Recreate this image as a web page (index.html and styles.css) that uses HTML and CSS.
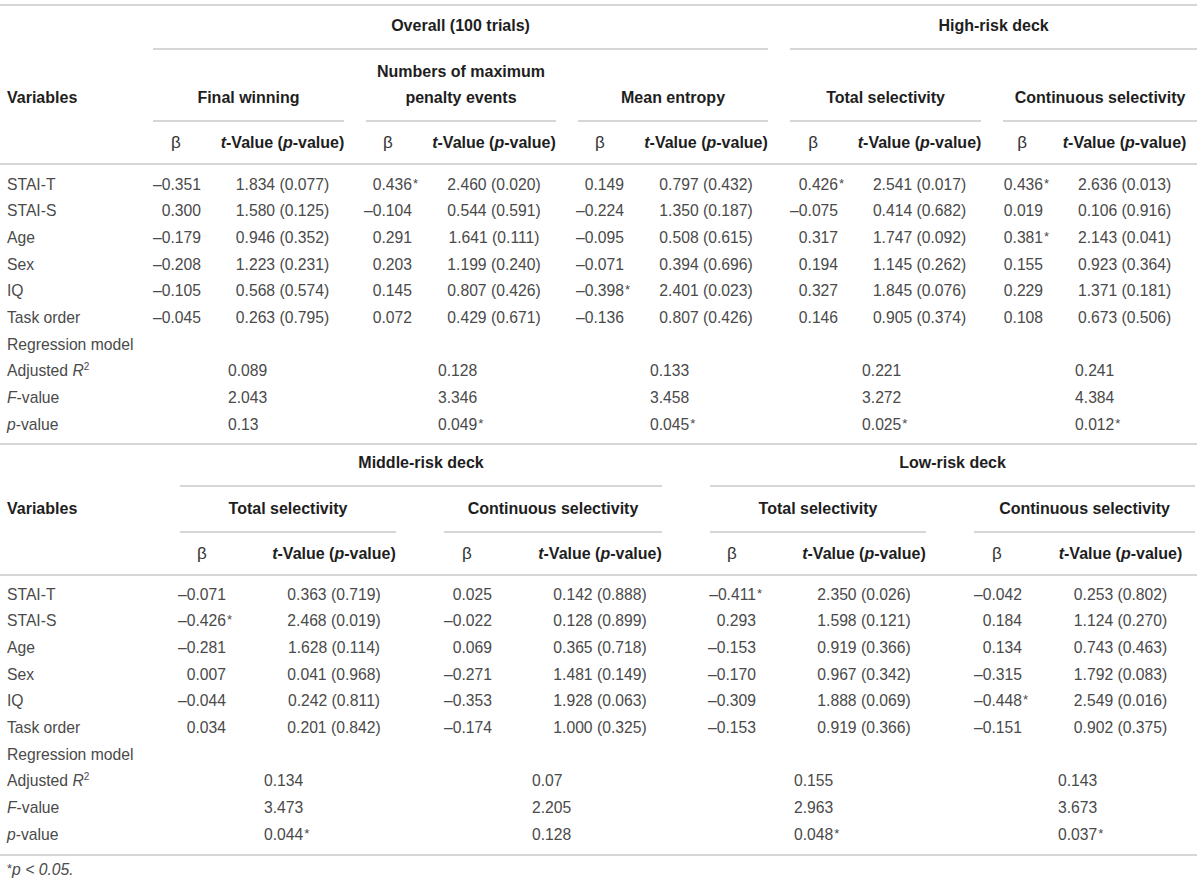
FILE: index.html
```html
<!DOCTYPE html>
<html lang="en">
<head>
<meta charset="utf-8">
<title>Regression table</title>
<link rel="stylesheet" href="styles.css">
</head>
<body>
<div class="wrap">
<table class="t t1">
  <colgroup>
    <col class="w142"><col class="w68"><col class="w145"><col class="w66"><col class="w146"><col class="w66"><col class="w146"><col class="w68"><col class="w145"><col class="w60"><col class="w145">
  </colgroup>
  <thead>
    <tr class="h1">
      <th></th>
      <th colspan="6" class="grp"><div class="ul">Overall (100 trials)</div></th>
      <th colspan="4" class="grp last"><div class="ul">High-risk deck</div></th>
    </tr>
    <tr class="h2">
      <th class="var">Variables</th>
      <th colspan="2" class="grp"><div class="ul">Final winning</div></th>
      <th colspan="2" class="grp"><div class="ul">Numbers of maximum<br>penalty events</div></th>
      <th colspan="2" class="grp"><div class="ul">Mean entropy</div></th>
      <th colspan="2" class="grp"><div class="ul">Total selectivity</div></th>
      <th colspan="2" class="grp last"><div class="ul">Continuous selectivity</div></th>
    </tr>
    <tr class="h3">
      <th></th>
      <th class="beta">β</th><th><i>t</i>-Value (<i>p</i>-value)</th>
      <th class="beta">β</th><th><i>t</i>-Value (<i>p</i>-value)</th>
      <th class="beta">β</th><th><i>t</i>-Value (<i>p</i>-value)</th>
      <th class="beta">β</th><th><i>t</i>-Value (<i>p</i>-value)</th>
      <th class="beta">β</th><th><i>t</i>-Value (<i>p</i>-value)</th>
    </tr>
  </thead>
  <tbody>
    <tr class="first"><td class="lab">STAI-T</td><td class="b">–0.351</td><td class="tv">1.834 (0.077)</td><td class="b">0.436<span class="s">*</span></td><td class="tv">2.460 (0.020)</td><td class="b">0.149</td><td class="tv">0.797 (0.432)</td><td class="b">0.426<span class="s">*</span></td><td class="tv">2.541 (0.017)</td><td class="b">0.436<span class="s">*</span></td><td class="tv">2.636 (0.013)</td></tr>
    <tr><td class="lab">STAI-S</td><td class="b">0.300</td><td class="tv">1.580 (0.125)</td><td class="b">–0.104</td><td class="tv">0.544 (0.591)</td><td class="b">–0.224</td><td class="tv">1.350 (0.187)</td><td class="b">–0.075</td><td class="tv">0.414 (0.682)</td><td class="b">0.019</td><td class="tv">0.106 (0.916)</td></tr>
    <tr><td class="lab">Age</td><td class="b">–0.179</td><td class="tv">0.946 (0.352)</td><td class="b">0.291</td><td class="tv">1.641 (0.111)</td><td class="b">–0.095</td><td class="tv">0.508 (0.615)</td><td class="b">0.317</td><td class="tv">1.747 (0.092)</td><td class="b">0.381<span class="s">*</span></td><td class="tv">2.143 (0.041)</td></tr>
    <tr><td class="lab">Sex</td><td class="b">–0.208</td><td class="tv">1.223 (0.231)</td><td class="b">0.203</td><td class="tv">1.199 (0.240)</td><td class="b">–0.071</td><td class="tv">0.394 (0.696)</td><td class="b">0.194</td><td class="tv">1.145 (0.262)</td><td class="b">0.155</td><td class="tv">0.923 (0.364)</td></tr>
    <tr><td class="lab">IQ</td><td class="b">–0.105</td><td class="tv">0.568 (0.574)</td><td class="b">0.145</td><td class="tv">0.807 (0.426)</td><td class="b">–0.398<span class="s">*</span></td><td class="tv">2.401 (0.023)</td><td class="b">0.327</td><td class="tv">1.845 (0.076)</td><td class="b">0.229</td><td class="tv">1.371 (0.181)</td></tr>
    <tr><td class="lab">Task order</td><td class="b">–0.045</td><td class="tv">0.263 (0.795)</td><td class="b">0.072</td><td class="tv">0.429 (0.671)</td><td class="b">–0.136</td><td class="tv">0.807 (0.426)</td><td class="b">0.146</td><td class="tv">0.905 (0.374)</td><td class="b">0.108</td><td class="tv">0.673 (0.506)</td></tr>
    <tr><td class="lab" colspan="11">Regression model</td></tr>
    <tr><td class="lab">Adjusted <i>R</i><sup>2</sup></td><td colspan="2" class="rv g1">0.089</td><td colspan="2" class="rv">0.128</td><td colspan="2" class="rv">0.133</td><td colspan="2" class="rv">0.221</td><td colspan="2" class="rv">0.241</td></tr>
    <tr><td class="lab"><i>F</i>-value</td><td colspan="2" class="rv g1">2.043</td><td colspan="2" class="rv">3.346</td><td colspan="2" class="rv">3.458</td><td colspan="2" class="rv">3.272</td><td colspan="2" class="rv">4.384</td></tr>
    <tr class="lastrow"><td class="lab"><i>p</i>-value</td><td colspan="2" class="rv g1">0.13</td><td colspan="2" class="rv">0.049<span class="a">*</span></td><td colspan="2" class="rv">0.045<span class="a">*</span></td><td colspan="2" class="rv">0.025<span class="a">*</span></td><td colspan="2" class="rv">0.012<span class="a">*</span></td></tr>
  </tbody>
</table>

<table class="t t2">
  <colgroup>
    <col class="w156"><col class="w92"><col class="w172"><col class="w94"><col class="w172"><col class="w92"><col class="w172"><col class="w94"><col class="w153">
  </colgroup>
  <thead>
    <tr class="h1">
      <th></th>
      <th colspan="4" class="grp"><div class="ul">Middle-risk deck</div></th>
      <th colspan="4" class="grp last"><div class="ul">Low-risk deck</div></th>
    </tr>
    <tr class="h2">
      <th class="var">Variables</th>
      <th colspan="2" class="grp"><div class="ul">Total selectivity</div></th>
      <th colspan="2" class="grp"><div class="ul">Continuous selectivity</div></th>
      <th colspan="2" class="grp"><div class="ul">Total selectivity</div></th>
      <th colspan="2" class="grp last"><div class="ul">Continuous selectivity</div></th>
    </tr>
    <tr class="h3">
      <th></th>
      <th class="beta">β</th><th><i>t</i>-Value (<i>p</i>-value)</th>
      <th class="beta">β</th><th><i>t</i>-Value (<i>p</i>-value)</th>
      <th class="beta">β</th><th><i>t</i>-Value (<i>p</i>-value)</th>
      <th class="beta">β</th><th><i>t</i>-Value (<i>p</i>-value)</th>
    </tr>
  </thead>
  <tbody>
    <tr class="first"><td class="lab">STAI-T</td><td class="b">–0.071</td><td class="tv">0.363 (0.719)</td><td class="b">0.025</td><td class="tv">0.142 (0.888)</td><td class="b">–0.411<span class="s">*</span></td><td class="tv">2.350 (0.026)</td><td class="b">–0.042</td><td class="tv">0.253 (0.802)</td></tr>
    <tr><td class="lab">STAI-S</td><td class="b">–0.426<span class="s">*</span></td><td class="tv">2.468 (0.019)</td><td class="b">–0.022</td><td class="tv">0.128 (0.899)</td><td class="b">0.293</td><td class="tv">1.598 (0.121)</td><td class="b">0.184</td><td class="tv">1.124 (0.270)</td></tr>
    <tr><td class="lab">Age</td><td class="b">–0.281</td><td class="tv">1.628 (0.114)</td><td class="b">0.069</td><td class="tv">0.365 (0.718)</td><td class="b">–0.153</td><td class="tv">0.919 (0.366)</td><td class="b">0.134</td><td class="tv">0.743 (0.463)</td></tr>
    <tr><td class="lab">Sex</td><td class="b">0.007</td><td class="tv">0.041 (0.968)</td><td class="b">–0.271</td><td class="tv">1.481 (0.149)</td><td class="b">–0.170</td><td class="tv">0.967 (0.342)</td><td class="b">–0.315</td><td class="tv">1.792 (0.083)</td></tr>
    <tr><td class="lab">IQ</td><td class="b">–0.044</td><td class="tv">0.242 (0.811)</td><td class="b">–0.353</td><td class="tv">1.928 (0.063)</td><td class="b">–0.309</td><td class="tv">1.888 (0.069)</td><td class="b">–0.448<span class="s">*</span></td><td class="tv">2.549 (0.016)</td></tr>
    <tr><td class="lab">Task order</td><td class="b">0.034</td><td class="tv">0.201 (0.842)</td><td class="b">–0.174</td><td class="tv">1.000 (0.325)</td><td class="b">–0.153</td><td class="tv">0.919 (0.366)</td><td class="b">–0.151</td><td class="tv">0.902 (0.375)</td></tr>
    <tr><td class="lab" colspan="9">Regression model</td></tr>
    <tr><td class="lab">Adjusted <i>R</i><sup>2</sup></td><td colspan="2" class="rv">0.134</td><td colspan="2" class="rv g2">0.07</td><td colspan="2" class="rv">0.155</td><td colspan="2" class="rv">0.143</td></tr>
    <tr><td class="lab"><i>F</i>-value</td><td colspan="2" class="rv">3.473</td><td colspan="2" class="rv g2">2.205</td><td colspan="2" class="rv">2.963</td><td colspan="2" class="rv">3.673</td></tr>
    <tr class="lastrow"><td class="lab"><i>p</i>-value</td><td colspan="2" class="rv">0.044<span class="a">*</span></td><td colspan="2" class="rv g2">0.128</td><td colspan="2" class="rv">0.048<span class="a">*</span></td><td colspan="2" class="rv">0.037<span class="a">*</span></td></tr>
  </tbody>
</table>
<p class="note"><span class="a">*</span><i>p &lt; 0.05.</i></p>
</div>
</body>
</html>
```

FILE: styles.css
```css
* { box-sizing: border-box; }
html, body { margin: 0; padding: 0; background: #fff; }
body {
  font-family: "Liberation Sans", Arial, Helvetica, sans-serif;
  font-size: 15.7px;
  line-height: 26.67px;
  color: #4a4a4a;
}
.wrap { padding-top: 4px; }

.t {
  width: 1197px;
  table-layout: fixed;
  border-collapse: separate;
  border-spacing: 0;
}
.t1 { border-top: 2px solid #d6d6d6; }

.w142 { width: 142px; } .w68 { width: 68px; } .w145 { width: 145px; }
.w66 { width: 66px; } .w146 { width: 146px; } .w60 { width: 60px; }
.w156 { width: 156px; } .w92 { width: 92px; } .w172 { width: 172px; }
.w94 { width: 94px; } .w153 { width: 153px; }

th {
  font-size: 16px;
  font-weight: 700;
  color: #1e1e1e;
  text-align: center;
  padding: 0;
  white-space: nowrap;
}
.grp { padding: 0 11px; vertical-align: bottom; }
.grp.last { padding-right: 0; }
.t2 .grp { padding: 0 24px; }
.t2 .grp.last { padding-right: 2px; }
.ul { border-bottom: 2px solid #d6d6d6; }

.t1 .h1 .ul { padding: 7px 0 8px; }
.t1 .h2 .ul { padding: 9px 0 8px; }
.t1 .h3 th { padding: 8px 0 6px; }
.t2 .h1 .ul { padding: 4.67px 0 8.67px; }
.t2 .h2 .ul { padding: 8.67px 0 8.67px; }
.t2 .h3 th { padding: 8px 0 6.33px; }

.h2 th { vertical-align: bottom; }
.var { text-align: left; padding: 0 0 10px 7px; }
.t2 .var { padding-bottom: 10.67px; }
.h3 th { border-bottom: 2px solid #d6d6d6; }
.beta { font-weight: 400; font-size: 17px; color: #333; }

td { padding: 0; white-space: nowrap; }
.lab { text-align: left; padding-left: 7px; }
.b { text-align: right; padding-right: 9px; }
.t2 .b { padding-right: 22px; }
.tv { text-align: center; }
.rv { text-align: left; padding-left: 83px; }
.rv.g1 { padding-left: 86px; }
.t2 .rv { padding-left: 108px; }
.t2 .rv.g2 { padding-left: 112px; }

.t1 .first td { padding-top: 7px; }
.t2 .first td { padding-top: 5.67px; }
.t1 .lastrow td { padding-bottom: 4.67px; border-bottom: 2px solid #d6d6d6; }
.t2 .lastrow td { padding-bottom: 5.67px; border-bottom: 2px solid #d6d6d6; }

.s {
  display: inline-block;
  width: 8px;
  margin-right: -8px;
  padding-left: 1px;
  text-align: left;
  font-size: 13px;
  line-height: 0;
  vertical-align: 2px;
}
.a {
  font-size: 13px;
  line-height: 0;
  vertical-align: 2px;
  padding-left: 1px;
}
sup { font-size: 10px; line-height: 0; vertical-align: 6px; }

.note {
  margin: 0;
  padding: 0.67px 0 0 7px;
  line-height: 26.67px;
}
.note .a { padding-left: 0; }
```
